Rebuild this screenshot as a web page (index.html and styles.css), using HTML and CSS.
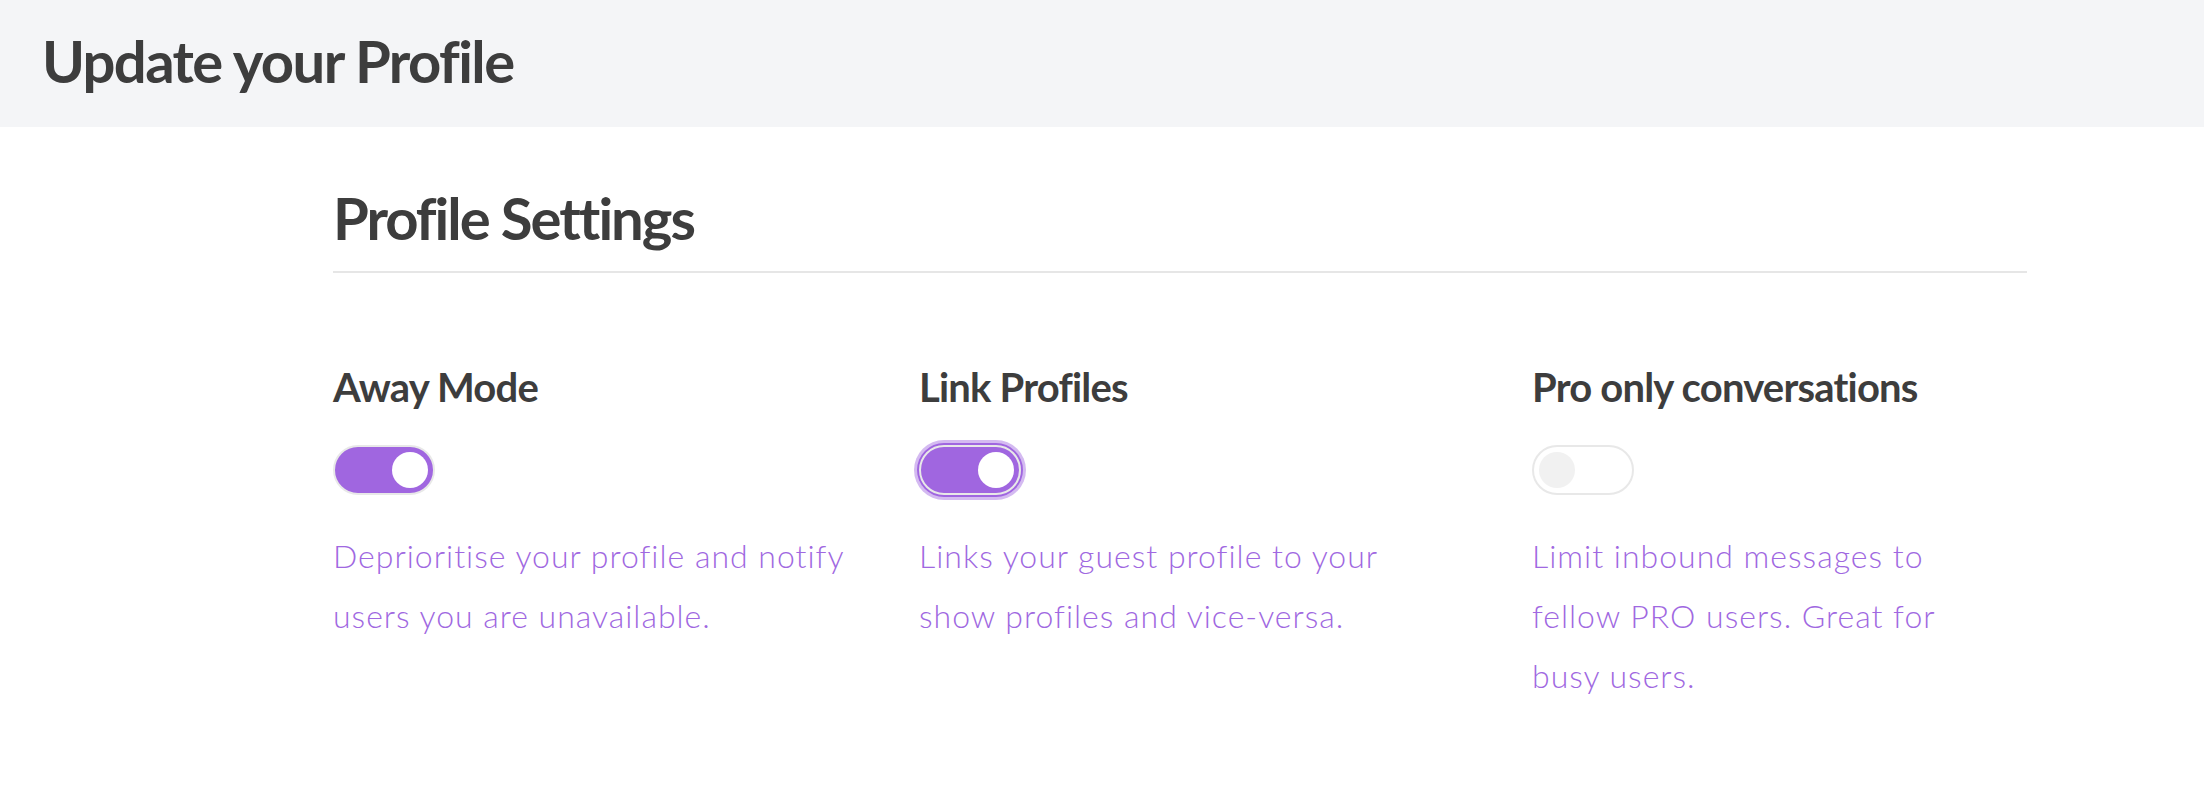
FILE: index.html
```html
<!DOCTYPE html>
<html lang="en">
<head>
<meta charset="utf-8">
<title>Update your Profile</title>
<link rel="stylesheet" href="styles.css">
</head>
<body>
  <header class="page-header">
    <h1 class="page-title">Update your Profile</h1>
  </header>
  <main class="panel">
    <section class="settings">
      <h2 class="settings-title">Profile Settings</h2>
      <div class="settings-grid">
        <div class="setting setting--first">
          <h3 class="setting-name">Away Mode</h3>
          <button class="toggle toggle--on" type="button" aria-pressed="true"><span class="knob"></span></button>
          <p class="setting-desc">Deprioritise your profile and notify users you are unavailable.</p>
        </div>
        <div class="setting setting--second">
          <h3 class="setting-name">Link Profiles</h3>
          <button class="toggle toggle--on toggle--focus" type="button" aria-pressed="true"><span class="knob"></span></button>
          <p class="setting-desc">Links your guest profile to your show profiles and vice-versa.</p>
        </div>
        <div class="setting setting--third">
          <h3 class="setting-name">Pro only conversations</h3>
          <button class="toggle" type="button" aria-pressed="false"><span class="knob"></span></button>
          <p class="setting-desc">Limit inbound messages to fellow PRO users. Great for busy users.</p>
        </div>
      </div>
    </section>
  </main>
</body>
</html>
```

FILE: styles.css
```css
* { box-sizing: border-box; }

html, body {
  margin: 0;
  padding: 0;
  background: #ffffff;
}

body {
  font-family: "Lato", "Noto Sans", sans-serif;
  color: #3d3d3d;
}

.page-header {
  background: #f4f5f7;
  height: 127px;
  padding: 26px 0 0 42px;
}

.page-title {
  margin: 0;
  font-size: 58px;
  line-height: 70px;
  font-weight: 700;
  letter-spacing: -1.6px;
  color: #3d3d3d;
}

.panel {
  padding: 56px 177px 40px 333px;
}

.settings-title {
  margin: 0;
  font-size: 58px;
  line-height: 70px;
  font-weight: 700;
  letter-spacing: -2px;
  padding-bottom: 18px;
  border-bottom: 2px solid #e6e6e6;
}

.settings-grid {
  display: grid;
  grid-template-columns: 586px 613px 1fr;
  padding-top: 90px;
}

.setting-name {
  margin: 0;
  font-size: 40px;
  line-height: 48px;
  font-weight: 700;
  letter-spacing: -0.8px;
  color: #3d3d3d;
}

.toggle {
  display: flex;
  align-items: center;
  justify-content: flex-start;
  width: 102px;
  height: 50px;
  margin: 34px 0 31px;
  padding: 0 5px;
  border: 2px solid #e8e8e8;
  border-radius: 25px;
  background: #ffffff;
  cursor: pointer;
}

.knob {
  display: block;
  width: 36px;
  height: 36px;
  border-radius: 50%;
  background: #f1f1f1;
}

.toggle--on {
  background: #a066e0;
  justify-content: flex-end;
}

.toggle--on .knob {
  background: #ffffff;
}

.toggle--focus {
  box-shadow: 0 0 0 2px #a066e0, 0 0 0 5px rgba(160, 102, 224, 0.45);
}

.setting-desc {
  margin: 0;
  font-size: 32px;
  line-height: 60px;
  font-weight: 300;
  letter-spacing: 1px;
  color: #a068e1;
}

.setting--first .setting-desc { max-width: 540px; }
.setting--second .setting-desc { max-width: 500px; }
.setting--third .setting-desc { max-width: 450px; }
```
